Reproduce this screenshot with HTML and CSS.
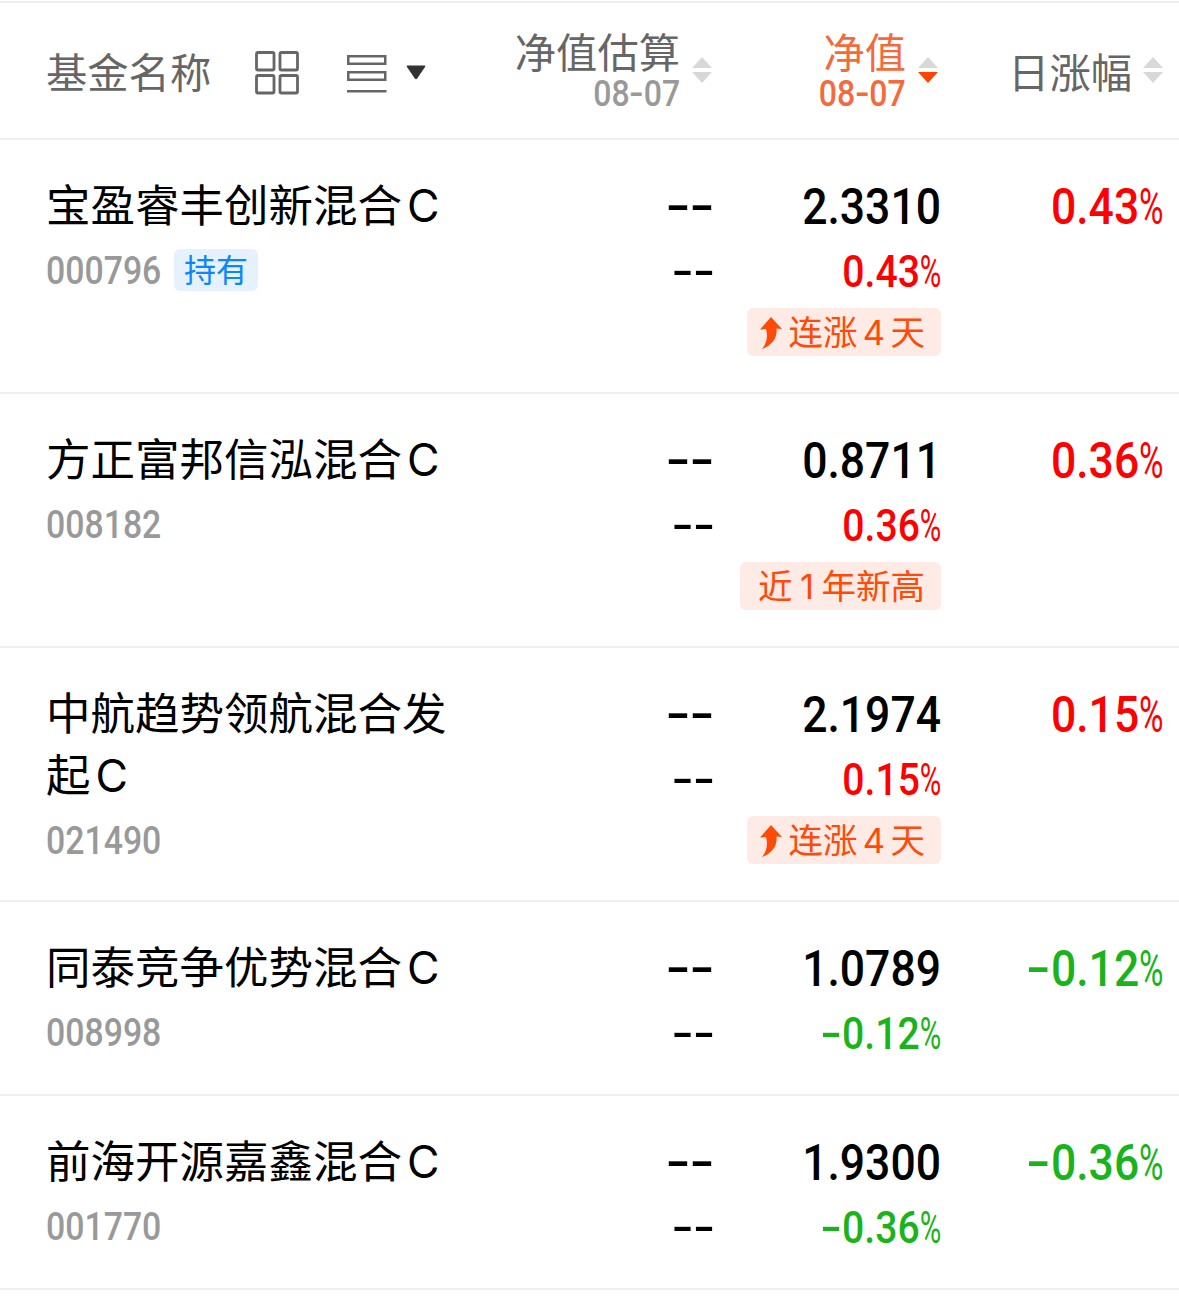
FILE: index.html
```html
<!DOCTYPE html>
<html lang="zh-CN">
<head>
	<meta charset="utf-8">
	<title>基金自选</title>
	<link rel="stylesheet" href="styles.css">
</head>
<body>
	<div class="fund-list">
		<div class="row header">
			<div class="title">
				<span class="text">基金名称</span>
				<svg class="icon-grid" width="44" height="44" viewBox="0 0 44 44">
					<rect x="1.5" y="1.5" width="17.5" height="17.5" rx="1.5"/>
					<rect x="25" y="1.5" width="17.5" height="17.5" rx="1.5"/>
					<rect x="1.5" y="24.5" width="17.5" height="17.5" rx="1.5"/>
					<rect x="25" y="24.5" width="17.5" height="17.5" rx="1.5"/>
				</svg>
				<svg class="icon-list" width="40" height="38" viewBox="0 0 40 38">
					<rect x="1.25" y="1.25" width="37" height="7.5"/>
					<rect x="1.25" y="17.25" width="37" height="7.5"/>
					<path d="M0 36.3H39.5"/>
				</svg>
				<svg class="icon-down" width="20" height="15" viewBox="0 0 20 15">
					<path d="M1.5 0.5H18.5Q20 0.7 19 2L11.2 13.5Q10 15 8.8 13.5L1 2Q0 0.7 1.5 0.5Z"/>
				</svg>
			</div>
			<div class="col sort-col">
				<div class="label">净值估算<span class="date num">08<i class="dash">-</i>07</span></div>
				<svg class="sort" width="20" height="26" viewBox="0 0 20 26"><path d="M10 0L20 11H0Z"/><path class="down" d="M0 15H20L10 26Z"/></svg>
			</div>
			<div class="col sort-col active">
				<div class="label">净值<span class="date num">08<i class="dash">-</i>07</span></div>
				<svg class="sort" width="20" height="26" viewBox="0 0 20 26"><path d="M10 0L20 11H0Z"/><path class="down" d="M0 15H20L10 26Z"/></svg>
			</div>
			<div class="col sort-col last">
				<div class="label">日涨幅</div>
				<svg class="sort" width="20" height="26" viewBox="0 0 20 26"><path d="M10 0L20 11H0Z"/><path class="down" d="M0 15H20L10 26Z"/></svg>
			</div>
		</div>

		<div class="row tall">
			<div class="fund">
				<div class="name">宝盈睿丰创新混合<span class="en">C</span></div>
				<div class="code"><span class="num">000796</span><span class="hold">持有</span></div>
			</div>
			<div class="col">
				<div class="big num"><i class="dash">-</i><i class="dash">-</i></div>
				<div class="small num"><i class="dash">-</i><i class="dash">-</i></div>
			</div>
			<div class="col">
				<div class="big num">2.3310</div>
				<div class="small num up">0.43<i class="pct">%</i></div>
				<div class="tag"><svg width="22" height="32" viewBox="0 0 22 32"><path d="M11 0L22 12L16.5 11.5C17.5 20 13 28 2 32C7 26 8 19 6 12L0 12.5Z"/></svg>连涨<span class="digit">4</span>天</div>
			</div>
			<div class="col">
				<div class="big num up">0.43<i class="pct">%</i></div>
			</div>
		</div>

		<div class="row tall">
			<div class="fund">
				<div class="name">方正富邦信泓混合<span class="en">C</span></div>
				<div class="code"><span class="num">008182</span></div>
			</div>
			<div class="col">
				<div class="big num"><i class="dash">-</i><i class="dash">-</i></div>
				<div class="small num"><i class="dash">-</i><i class="dash">-</i></div>
			</div>
			<div class="col">
				<div class="big num">0.8711</div>
				<div class="small num up">0.36<i class="pct">%</i></div>
				<div class="tag high">近<span class="digit one">1</span>年新高</div>
			</div>
			<div class="col">
				<div class="big num up">0.36<i class="pct">%</i></div>
			</div>
		</div>

		<div class="row tall">
			<div class="fund">
				<div class="name">中航趋势领航混合发起<span class="en">C</span></div>
				<div class="code"><span class="num">021490</span></div>
			</div>
			<div class="col">
				<div class="big num"><i class="dash">-</i><i class="dash">-</i></div>
				<div class="small num"><i class="dash">-</i><i class="dash">-</i></div>
			</div>
			<div class="col">
				<div class="big num">2.1974</div>
				<div class="small num up">0.15<i class="pct">%</i></div>
				<div class="tag"><svg width="22" height="32" viewBox="0 0 22 32"><path d="M11 0L22 12L16.5 11.5C17.5 20 13 28 2 32C7 26 8 19 6 12L0 12.5Z"/></svg>连涨<span class="digit">4</span>天</div>
			</div>
			<div class="col">
				<div class="big num up">0.15<i class="pct">%</i></div>
			</div>
		</div>

		<div class="row">
			<div class="fund">
				<div class="name">同泰竞争优势混合<span class="en">C</span></div>
				<div class="code"><span class="num">008998</span></div>
			</div>
			<div class="col">
				<div class="big num"><i class="dash">-</i><i class="dash">-</i></div>
				<div class="small num"><i class="dash">-</i><i class="dash">-</i></div>
			</div>
			<div class="col">
				<div class="big num">1.0789</div>
				<div class="small num fall"><i class="dash">-</i>0.12<i class="pct">%</i></div>
			</div>
			<div class="col">
				<div class="big num fall"><i class="dash">-</i>0.12<i class="pct">%</i></div>
			</div>
		</div>

		<div class="row">
			<div class="fund">
				<div class="name">前海开源嘉鑫混合<span class="en">C</span></div>
				<div class="code"><span class="num">001770</span></div>
			</div>
			<div class="col">
				<div class="big num"><i class="dash">-</i><i class="dash">-</i></div>
				<div class="small num"><i class="dash">-</i><i class="dash">-</i></div>
			</div>
			<div class="col">
				<div class="big num">1.9300</div>
				<div class="small num fall"><i class="dash">-</i>0.36<i class="pct">%</i></div>
			</div>
			<div class="col">
				<div class="big num fall"><i class="dash">-</i>0.36<i class="pct">%</i></div>
			</div>
		</div>
	</div>
</body>
</html>
```
FILE: styles.css
```css
* {
	box-sizing: border-box;
}

body {
	margin: 0;
	background-color: #fff;
	color: #000;
	font-family: Inter, "Noto Sans CJK SC", sans-serif;
	text-autospace: no-autospace;
}

.fund-list {
	margin-top: 1px;
	border-top: 2px solid #efefef;
}

.row {
	display: grid;
	grid-template-columns: 430px 236px 229px 223px;
	height: 194px;
	padding: 34px 15px 0 46px;
	border-bottom: 2px solid #efefef;
}

.row.tall {
	height: 254px;
}

.row.header {
	height: 137px;
	padding-top: 4px;
	align-items: center;
	color: #666;
	font-size: 41.3px;
	line-height: 42px;
	white-space: nowrap;
}

.title {
	display: flex;
	align-items: center;
}

.title .text {
	padding-top: 1px;
}

.icon-grid {
	margin-left: 43.5px;
	fill: none;
	stroke: #666;
	stroke-width: 2.8;
}

.icon-list {
	margin: 3px 0 0 48px;
	fill: none;
	stroke: #666;
	stroke-width: 2.5;
}

.icon-down {
	margin: -1px 0 0 19px;
	fill: #333;
}

.col {
	display: flex;
	flex-direction: column;
	align-items: flex-end;
}

.sort-col {
	flex-direction: row;
	align-items: center;
	justify-content: flex-end;
}

.label {
	text-align: right;
}

.last .label {
	padding-top: 1px;
}

.active .label {
	color: #f56a3c;
}

.date {
	display: block;
	height: 40px;
	font-size: 36px;
	line-height: 40px;
	color: #999;
}

.active .date {
	color: #f56a3c;
}

.sort {
	margin: -5px 0 0 12px;
	fill: #d8d8d8;
}

.active .sort {
	margin-right: 3px;
}

.last .sort {
	margin-left: 11px;
	margin-right: 1px;
}

.active .down {
	fill: #ff4400;
}

/* narrow digits */
.num {
	font-family: Roboto, sans-serif;
	font-weight: 500;
	white-space: nowrap;
	transform: scaleX(0.89);
	transform-origin: right center;
}

.num i {
	display: inline-block;
	font-style: normal;
	text-align: center;
}

.dash {
	width: 0.54em;
	transform: translate(0.05em, -0.02em) scaleX(1.6);
}

.fall .dash {
	transform: translate(-0.01em, -0.02em) scaleX(1.6);
}

.date .dash {
	width: 0.44em;
	transform: scaleX(1.3);
}

.pct {
	width: 0.55em;
	font-weight: 400;
	text-indent: -0.09em;
	transform: scaleX(0.75);
}

.name {
	width: 405px;
	font-size: 44.5px;
	line-height: 62px;
	padding-top: 1px;
}

.en {
	margin-left: 5px;
}

.code {
	display: flex;
	align-items: center;
	height: 66px;
	color: #999;
}

.code .num {
	width: 116px;
	padding-top: 1px;
	font-size: 38px;
	transform-origin: left center;
}

.hold {
	width: 84px;
	height: 42px;
	margin-left: 12px;
	border-radius: 6px;
	background-color: #e5f2fd;
	color: #0c86f8;
	font-size: 32px;
	line-height: 43px;
	text-align: center;
}

.big {
	height: 66px;
	font-size: 50px;
	line-height: 67px;
}

.small {
	height: 64px;
	font-size: 44px;
	line-height: 64px;
}

.up {
	color: #fe0000;
}

.fall {
	color: #1bb31b;
}

.tag {
	display: flex;
	align-items: center;
	height: 48px;
	margin-top: 4px;
	padding: 2px 16px 0 13px;
	border-radius: 6px;
	background-color: #feebe5;
	color: #ff4a08;
	font-size: 34.5px;
	line-height: 46px;
}

.tag.high {
	padding-left: 18px;
}

.tag svg {
	margin-right: 7px;
	fill: #ff4a08;
}

.digit {
	width: 33px;
	text-align: center;
}

.digit.one {
	width: 29px;
}
```
